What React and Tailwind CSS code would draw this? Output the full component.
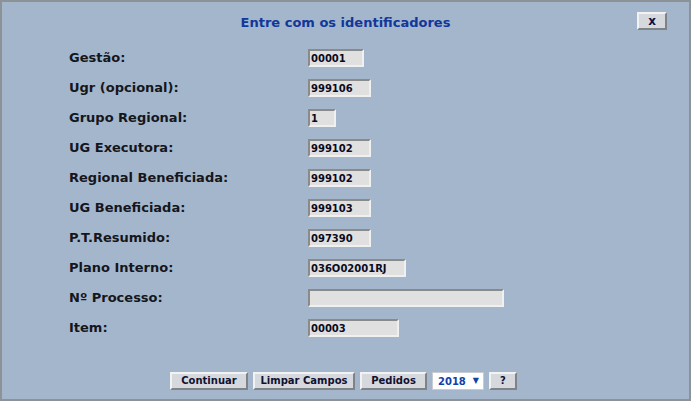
import React from "react";

const rows = [
  ["Gestão:", "00001", "w-[56px]"],
  ["Ugr (opcional):", "999106", "w-[63px]"],
  ["Grupo Regional:", "1", "w-[28px]"],
  ["UG Executora:", "999102", "w-[63px]"],
  ["Regional Beneficiada:", "999102", "w-[63px]"],
  ["UG Beneficiada:", "999103", "w-[63px]"],
  ["P.T.Resumido:", "097390", "w-[63px]"],
  ["Plano Interno:", "036O02001RJ", "w-[98px]"],
  ["Nº Processo:", "", "w-[196px]"],
  ["Item:", "00003", "w-[91px]"],
];

function Btn({ children, className = "" }) {
  return (
    <button
      className={
        "h-[18px] bg-[#d5d9de] border-2 border-t-[#f2f2f2] border-l-[#f2f2f2] border-b-[#7f8287] border-r-[#7f8287] text-[10px] font-bold text-[#101030] leading-none flex items-center justify-center " +
        className
      }
    >
      {children}
    </button>
  );
}

export default function App() {
  return (
    <div
      className="w-[691px] h-[401px] bg-[#a4b6cc] border-2 border-[#8d9296] flex flex-col"
      style={{ fontFamily: '"DejaVu Sans", Verdana, sans-serif' }}
    >
      <div className="h-[40px] flex items-center justify-center relative">
        <h1 className="text-[13px] font-bold text-[#12379a] pt-[1px]">Entre com os identificadores</h1>
        <Btn className="absolute right-[22px] top-[10px] w-[30px] text-[12px] text-[#101040]">x</Btn>
      </div>
      <div className="flex flex-col pl-[67px] pt-[1px]">
        {rows.map(([label, value, w]) => (
          <div key={label} className="h-[30px] flex items-center">
            <div className="w-[239px] text-[13px] font-bold text-[#14161c]">{label}</div>
            <div
              className={
                "h-[18px] bg-[#e0e0e0] border-2 border-t-[#8a8a8a] border-l-[#8a8a8a] border-b-[#f0f0f0] border-r-[#f0f0f0] text-[10px] font-bold text-[#0a0a20] flex items-center pl-[1px] " +
                w
              }
            >
              {value}
            </div>
          </div>
        ))}
      </div>
      <div className="flex justify-center gap-[5px] pt-[29px] pr-[4px]">
        <Btn className="w-[78px]">Continuar</Btn>
        <Btn className="w-[102px]">Limpar Campos</Btn>
        <Btn className="w-[67px]">Pedidos</Btn>
        <div className="h-[18px] w-[52px] bg-white border border-[#c8ccd2] flex items-center pl-[5px] gap-[7px] text-[10px] font-bold text-[#1040a8]">
          <span>2018</span>
          <span className="text-[8px]">▼</span>
        </div>
        <Btn className="w-[28px]">?</Btn>
      </div>
    </div>
  );
}
